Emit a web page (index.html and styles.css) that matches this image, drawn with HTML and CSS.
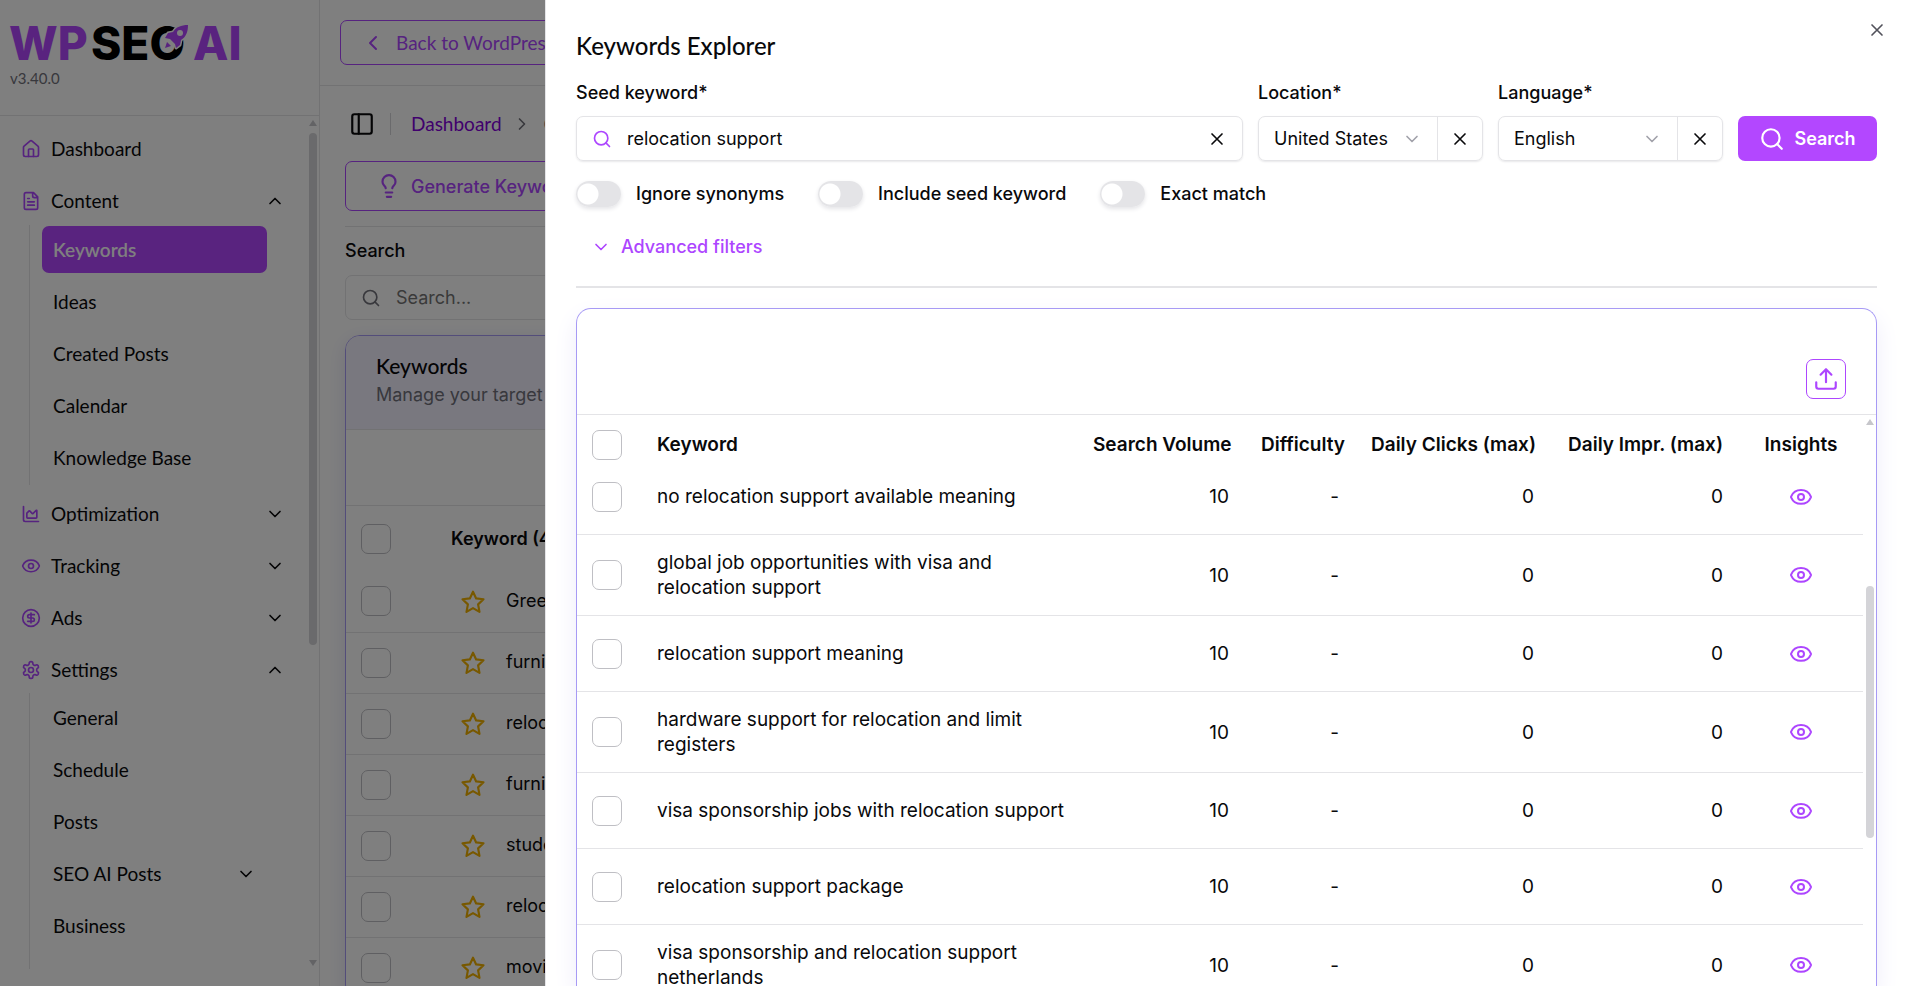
FILE: index.html
```html
<!DOCTYPE html>
<html lang="en">
<head>
    <meta charset="UTF-8">
    <meta name="viewport" content="width=device-width, initial-scale=1.0">
    <title>Keywords Explorer</title>
    <link rel="stylesheet" href="styles.css">
</head>
<body>
    <svg class="sprite" aria-hidden="true">
        <symbol id="eye" viewBox="0 0 24 24"><path d="M2.1 12.3a1 1 0 0 1 0-.7 10.75 10.75 0 0 1 19.8 0 1 1 0 0 1 0 .7 10.75 10.75 0 0 1-19.8 0"/><circle cx="12" cy="12" r="3"/></symbol>
        <symbol id="down" viewBox="0 0 24 24"><path d="m6 9 6 6 6-6"/></symbol>
        <symbol id="up" viewBox="0 0 24 24"><path d="m18 15-6-6-6 6"/></symbol>
        <symbol id="left" viewBox="0 0 24 24"><path d="m15 18-6-6 6-6"/></symbol>
        <symbol id="right" viewBox="0 0 24 24"><path d="m9 18 6-6-6-6"/></symbol>
        <symbol id="close" viewBox="0 0 24 24"><path d="M18 6 6 18M6 6l12 12"/></symbol>
        <symbol id="search" viewBox="0 0 24 24"><circle cx="11" cy="11" r="8"/><path d="m21 21-4.3-4.3"/></symbol>
        <symbol id="star" viewBox="0 0 24 24"><path d="m12 2.5 2.9 6.2 6.8.8-5 4.7 1.3 6.9-6-3.4-6 3.4 1.3-6.9-5-4.7 6.8-.8z"/></symbol>
    </svg>

    <div class="app">
        <aside class="sidebar">
            <div class="brand">
                <svg class="logo" viewBox="0 0 240 48" role="img" aria-label="WP SEO AI">
                    <text class="logo-purple" x="0" y="42">WP</text>
                    <text class="logo-black" x="82" y="42">SEO</text>
                    <text class="logo-purple" x="184" y="42">AI</text>
                    <g transform="translate(155 7)">
                        <path class="rocket-edge" d="M24 0C17 0 12 2 9 7L4 8l-3 5 5 1 5 5 1 4 4-3 1-5c5-3 7-8 7-15z"/>
                        <path class="rocket" d="M24 0C17 0 12 2 9 7L4 8l-3 5 5 1 5 5 1 4 4-3 1-5c5-3 7-8 7-15zM3 17l-2 6 6-2z"/>
                        <circle class="rocket-window" cx="16" cy="8" r="3"/>
                    </g>
                </svg>
                <span class="version">v3.40.0</span>
            </div>
            <nav class="nav">
                <a class="nav-item" href="#"><svg class="icon-nav" viewBox="0 0 24 24"><path d="M15 21v-8a1 1 0 0 0-1-1h-4a1 1 0 0 0-1 1v8"/><path d="M3 10a2 2 0 0 1 .7-1.5l7-6a2 2 0 0 1 2.6 0l7 6A2 2 0 0 1 21 10v9a2 2 0 0 1-2 2H5a2 2 0 0 1-2-2z"/></svg>Dashboard</a>
                <a class="nav-item" href="#"><svg class="icon-nav" viewBox="0 0 24 24"><path d="M15 2H6a2 2 0 0 0-2 2v16a2 2 0 0 0 2 2h12a2 2 0 0 0 2-2V7zM14 2v4a2 2 0 0 0 2 2h4M10 9H8M16 13H8M16 17H8"/></svg>Content<svg class="icon-arrow"><use href="#up"/></svg></a>
                <div class="sub">
                    <a class="sub-item active" href="#">Keywords</a>
                    <a class="sub-item" href="#">Ideas</a>
                    <a class="sub-item" href="#">Created Posts</a>
                    <a class="sub-item" href="#">Calendar</a>
                    <a class="sub-item" href="#">Knowledge Base</a>
                </div>
                <a class="nav-item" href="#"><svg class="icon-nav" viewBox="0 0 24 24"><path d="M3 3v16a2 2 0 0 0 2 2h16"/><path d="M7 11.2a.5.5 0 0 1 .1-.3l2.6-2.6a.5.5 0 0 1 .7 0l3.2 3.2a.5.5 0 0 0 .7 0l3.9-3.9a.5.5 0 0 1 .8.3V16a1 1 0 0 1-1 1H8a1 1 0 0 1-1-1z"/></svg>Optimization<svg class="icon-arrow"><use href="#down"/></svg></a>
                <a class="nav-item" href="#"><svg class="icon-nav"><use href="#eye"/></svg>Tracking<svg class="icon-arrow"><use href="#down"/></svg></a>
                <a class="nav-item" href="#"><svg class="icon-nav" viewBox="0 0 24 24"><circle cx="12" cy="12" r="10"/><path d="M16 8h-6a2 2 0 1 0 0 4h4a2 2 0 1 1 0 4H8M12 18V6"/></svg>Ads<svg class="icon-arrow"><use href="#down"/></svg></a>
                <a class="nav-item" href="#"><svg class="icon-nav" viewBox="0 0 24 24"><path d="M12.2 2h-.4a2 2 0 0 0-2 2v.2a2 2 0 0 1-1 1.7l-.4.3a2 2 0 0 1-2 0l-.2-.1a2 2 0 0 0-2.7.7l-.2.4a2 2 0 0 0 .7 2.7l.2.1a2 2 0 0 1 1 1.7v.5a2 2 0 0 1-1 1.8l-.2.1a2 2 0 0 0-.7 2.7l.2.4a2 2 0 0 0 2.7.7l.2-.1a2 2 0 0 1 2 0l.4.3a2 2 0 0 1 1 1.7v.2a2 2 0 0 0 2 2h.4a2 2 0 0 0 2-2v-.2a2 2 0 0 1 1-1.7l.4-.3a2 2 0 0 1 2 0l.2.1a2 2 0 0 0 2.7-.7l.2-.4a2 2 0 0 0-.7-2.7l-.2-.1a2 2 0 0 1-1-1.8v-.5a2 2 0 0 1 1-1.7l.2-.1a2 2 0 0 0 .7-2.7l-.2-.4a2 2 0 0 0-2.7-.7l-.2.1a2 2 0 0 1-2 0l-.4-.3a2 2 0 0 1-1-1.7V4a2 2 0 0 0-2-2z"/><circle cx="12" cy="12" r="3"/></svg>Settings<svg class="icon-arrow"><use href="#up"/></svg></a>
                <div class="sub sub-last">
                    <a class="sub-item" href="#">General</a>
                    <a class="sub-item" href="#">Schedule</a>
                    <a class="sub-item" href="#">Posts</a>
                    <a class="sub-item" href="#">SEO AI Posts<svg class="icon-arrow"><use href="#down"/></svg></a>
                    <a class="sub-item" href="#">Business</a>
                </div>
                <div class="scrollbar"><i class="scroll-up"></i><i class="scroll-thumb nav-thumb"></i><i class="scroll-down"></i></div>
            </nav>
        </aside>

        <main class="main">
            <header class="topbar">
                <a class="back" href="#"><svg class="icon-24"><use href="#left"/></svg>Back to WordPress</a>
            </header>
            <div class="content">
                <div class="crumbs">
                    <button class="toggle-sidebar" aria-label="Toggle sidebar"><svg class="icon-26" viewBox="0 0 24 24"><rect x="3" y="3" width="18" height="18" rx="2"/><path d="M9 3v18"/></svg></button>
                    <span class="crumb-line"></span>
                    <a class="crumb" href="#">Dashboard</a>
                    <svg class="icon-20 crumb-arrow"><use href="#right"/></svg>
                    <span class="crumb-current">Content</span>
                </div>
                <button class="generate"><svg class="icon-26" viewBox="0 0 24 24"><path d="M15 14c.2-1 .7-1.700 1.500-2.500A4.700 4.700 0 0 0 18 8 6 6 0 0 0 6 8c0 1 .2 2.200 1.500 3.500.7.7 1.300 1.500 1.500 2.500M9 18h6M10 22h4"/></svg>Generate Keywords</button>
                <div class="filter">
                    <label class="label" for="table-search">Search</label>
                    <div class="search-box"><svg class="icon-20"><use href="#search"/></svg><input id="table-search" type="text" placeholder="Search..."></div>
                </div>
                <section class="card">
                    <div class="card-head">
                        <h2>Keywords</h2>
                        <p>Manage your target keywords</p>
                    </div>
                    <div class="card-tools"></div>
                    <table class="saved">
                        <thead>
                            <tr><th class="col-check"><input type="checkbox" aria-label="Select all"></th><th>Keyword (48)</th></tr>
                        </thead>
                        <tbody>
                            <tr><td><input type="checkbox" aria-label="Select"></td><td><svg class="icon-star"><use href="#star"/></svg>Green moving company</td></tr>
                            <tr><td><input type="checkbox" aria-label="Select"></td><td><svg class="icon-star"><use href="#star"/></svg>furniture moving</td></tr>
                            <tr><td><input type="checkbox" aria-label="Select"></td><td><svg class="icon-star"><use href="#star"/></svg>relocation services</td></tr>
                            <tr><td><input type="checkbox" aria-label="Select"></td><td><svg class="icon-star"><use href="#star"/></svg>furniture storage</td></tr>
                            <tr><td><input type="checkbox" aria-label="Select"></td><td><svg class="icon-star"><use href="#star"/></svg>student moving</td></tr>
                            <tr><td><input type="checkbox" aria-label="Select"></td><td><svg class="icon-star"><use href="#star"/></svg>relocation company</td></tr>
                            <tr><td><input type="checkbox" aria-label="Select"></td><td><svg class="icon-star"><use href="#star"/></svg>moving company</td></tr>
                        </tbody>
                    </table>
                </section>
            </div>
        </main>
    </div>

    <div class="overlay"></div>

    <div class="drawer" role="dialog" aria-labelledby="drawer-title">
        <button class="close" aria-label="Close"><svg class="icon-20"><use href="#close"/></svg></button>
        <h1 id="drawer-title">Keywords Explorer</h1>
        <form class="explorer">
            <div class="field field-wide">
                <label class="label" for="seed">Seed keyword*</label>
                <div class="control">
                    <svg class="icon-20 purple"><use href="#search"/></svg>
                    <input id="seed" type="text" value="relocation support">
                    <button type="button" class="clear" aria-label="Clear keyword"><svg class="icon-20"><use href="#close"/></svg></button>
                </div>
            </div>
            <div class="field">
                <label class="label" for="location">Location*</label>
                <div class="control">
                    <select id="location"><option>United States</option></select>
                    <svg class="icon-20 faded"><use href="#down"/></svg>
                    <button type="button" class="clear split" aria-label="Clear location"><svg class="icon-20"><use href="#close"/></svg></button>
                </div>
            </div>
            <div class="field">
                <label class="label" for="language">Language*</label>
                <div class="control">
                    <select id="language"><option>English</option></select>
                    <svg class="icon-20 faded"><use href="#down"/></svg>
                    <button type="button" class="clear split" aria-label="Clear language"><svg class="icon-20"><use href="#close"/></svg></button>
                </div>
            </div>
            <button type="button" class="submit"><svg class="icon-26"><use href="#search"/></svg>Search</button>
        </form>
        <div class="switches">
            <label class="label"><input type="checkbox" class="switch">Ignore synonyms</label>
            <label class="label"><input type="checkbox" class="switch">Include seed keyword</label>
            <label class="label"><input type="checkbox" class="switch">Exact match</label>
        </div>
        <button class="advanced"><svg class="icon-20"><use href="#down"/></svg>Advanced filters</button>

        <section class="results">
            <div class="results-tools">
                <button class="export" aria-label="Export"><svg class="icon-26" viewBox="0 0 24 24"><path d="M12 15V3M17 8l-5-5-5 5M21 15v4a2 2 0 0 1-2 2H5a2 2 0 0 1-2-2v-4"/></svg></button>
            </div>
            <div class="results-body">
                <table class="found">
                    <thead>
                        <tr>
                            <th class="w-check"><input type="checkbox" aria-label="Select all"></th>
                            <th>Keyword</th>
                            <th class="num w-volume">Search Volume</th>
                            <th class="num w-difficulty">Difficulty</th>
                            <th class="num w-clicks">Daily Clicks (max)</th>
                            <th class="num w-impr">Daily Impr. (max)</th>
                            <th class="mid w-insights">Insights</th>
                        </tr>
                    </thead>
                    <tbody id="rows">
                        <!-- Rows are inserted below -->
                    </tbody>
                </table>
                <div class="scrollbar"><i class="scroll-up"></i><i class="scroll-thumb results-thumb"></i></div>
            </div>
        </section>
    </div>

    <script>
        const keywords = [
            'no relocation support available meaning',
            'global job opportunities with visa and relocation support',
            'relocation support meaning',
            'hardware support for relocation and limit registers',
            'visa sponsorship jobs with relocation support',
            'relocation support package',
            'visa sponsorship and relocation support netherlands'
        ];
        const tbody = document.getElementById('rows');
        keywords.forEach(name => {
            tbody.insertAdjacentHTML('beforeend', `
                <tr>
                    <td><input type="checkbox" aria-label="Select ${name}"></td>
                    <td>${name}</td>
                    <td class="num">10</td>
                    <td class="num">-</td>
                    <td class="num">0</td>
                    <td class="num">0</td>
                    <td class="mid"><button class="view" aria-label="View insights"><svg class="icon-24"><use href="#eye"/></svg></button></td>
                </tr>
            `);
        });
    </script>
</body>
</html>
```
FILE: styles.css
```css
* {
    box-sizing: border-box;
}
body {
    margin: 0;
    height: 100vh;
    overflow: hidden;
    font-family: Inter, sans-serif;
    font-size: 18px;
    line-height: 25px;
    color: #09090b;
    background: #fff;
}
h1, h2, p {
    margin: 0;
}
a {
    color: inherit;
    text-decoration: none;
}
button {
    font: inherit;
    color: inherit;
    background: none;
    border: 0;
    padding: 0;
    display: flex;
    align-items: center;
    justify-content: center;
}
svg {
    fill: none;
    stroke: currentColor;
    stroke-width: 2;
    stroke-linecap: round;
    stroke-linejoin: round;
    flex: none;
}
.sprite {
    display: none;
}
.icon-20, .icon-nav, .icon-arrow {
    width: 20px;
    height: 20px;
}
.icon-24 {
    width: 24px;
    height: 24px;
}
.icon-26 {
    width: 26px;
    height: 26px;
}
.purple {
    color: #ad46ff;
}
.faded {
    color: #a1a1aa;
}
input[type="checkbox"] {
    appearance: none;
    display: block;
    width: 30px;
    height: 30px;
    margin: 0;
    border: 1px solid #bfbfc4;
    border-radius: 7px;
}

/* page behind the drawer */
.app {
    display: flex;
    height: 100vh;
    overflow: hidden;
}
.sidebar {
    display: flex;
    flex-direction: column;
    width: 320px;
    flex: none;
    border-right: 1px solid #e4e4e7;
    font-family: Lato, sans-serif;
    font-size: 19px;
}
.brand {
    height: 116px;
    padding: 18px 9px 0;
    border-bottom: 1px solid #e4e4e7;
}
.logo {
    display: block;
    width: 240px;
    height: 48px;
    overflow: visible;
    font-family: Inter, sans-serif;
    font-size: 46px;
    font-weight: 800;
    stroke: none;
}
.logo-purple, .rocket {
    fill: #b347ff;
}
.logo-black {
    fill: #000;
}
.rocket-edge {
    fill: #fff;
    stroke: #fff;
    stroke-width: 3;
}
.rocket-window {
    fill: #fff;
}
.version {
    display: block;
    font-size: 15px;
    line-height: 24px;
    padding-left: 1px;
    color: #71717a;
}
.nav {
    position: relative;
    flex: 1;
    min-height: 0;
    padding: 9px 37px 0 9px;
    margin-bottom: 17px;
    overflow: hidden;
    display: flex;
    flex-direction: column;
    gap: 5px;
}
.nav-item {
    display: flex;
    align-items: center;
    flex: none;
    gap: 10px;
    height: 47px;
    padding: 0 0 0 12px;
}
.nav-item .icon-nav {
    color: #ad46ff;
}
.icon-arrow {
    margin-left: auto;
}
.nav-item .icon-arrow {
    margin-right: -3px;
}
.sub {
    display: flex;
    flex-direction: column;
    flex: none;
    gap: 5px;
    margin: -4px 15px 0 20px;
    padding: 1px 0 4px 12px;
    border-left: 1px solid #e4e4e7;
}
.sub-last {
    flex: 1;
    margin-top: -5px;
}
.sub-item {
    display: flex;
    align-items: center;
    flex: none;
    height: 47px;
    padding: 0 11px;
    border-radius: 7px;
}
.active {
    background: #b347ff;
    color: #fff;
    font-weight: 600;
}

/* drawn scrollbars */
.scrollbar {
    position: absolute;
    top: 0;
    right: 0;
    bottom: 0;
    width: 14px;
}
.scrollbar i {
    position: absolute;
    left: 4px;
    width: 8px;
}
.scroll-up {
    top: 4px;
    border: 4px solid transparent;
    border-top: 0;
    border-bottom: 6px solid #c6c6cb;
}
.scroll-down {
    bottom: 3px;
    border: 4px solid transparent;
    border-bottom: 0;
    border-top: 6px solid #c6c6cb;
}
.scroll-thumb {
    border-radius: 4px;
    background: #d4d4d8;
}
.nav-thumb {
    top: 2%;
    height: 60%;
}
.results-thumb {
    top: 30%;
    height: 44%;
}

.main {
    flex: 1;
    min-width: 0;
    overflow: hidden;
}
.topbar {
    display: flex;
    height: 86px;
    padding: 20px;
    border-bottom: 1px solid #e4e4e7;
}
.back {
    display: flex;
    align-items: center;
    gap: 11px;
    height: 45px;
    padding: 0 20px;
    border: 1px solid #ad46ff;
    border-radius: 7px;
    color: #ad46ff;
    font-family: Lato, sans-serif;
    font-size: 19px;
}
.content {
    padding: 18px 25px;
}
.crumbs {
    display: flex;
    align-items: center;
    height: 39px;
    padding-left: 4px;
    font-family: Lato, sans-serif;
    font-size: 19px;
}
.crumb-line {
    width: 1px;
    height: 22px;
    margin: 0 20px 0 15px;
    background: #d4d4d8;
}
.crumb {
    margin-right: 10px;
    color: #8200db;
}
.crumb-arrow {
    color: #71717a;
}
.crumb-current {
    margin-left: 12px;
    color: #71717a;
}
.generate {
    height: 50px;
    margin: 18px 0 15px;
    padding: 0 30px;
    gap: 9px;
    border: 1px solid #ad46ff;
    border-radius: 7px;
    color: #ad46ff;
    font-weight: 500;
}
.filter {
    border-top: 1px solid #e4e4e7;
    padding-top: 11px;
}
.label {
    font-weight: 500;
}
.search-box {
    display: flex;
    align-items: center;
    height: 45px;
    margin: 12px 0 15px;
    padding: 0 15px;
    gap: 15px;
    border: 1px solid #e4e4e7;
    border-radius: 7px;
    color: #71717a;
}
.search-box input, .control input, .control select {
    flex: 1;
    min-width: 0;
    height: 100%;
    padding: 0;
    border: 0;
    outline: 0;
    background: none;
    font: inherit;
    color: inherit;
    appearance: none;
}
.card {
    border: 1px solid #a79af5;
    border-radius: 15px;
    overflow: hidden;
    box-shadow: 0 5px 20px #e4e2f5;
}
.card-head {
    height: 94px;
    padding: 15px 30px;
    background: #f2f0ff;
    border-bottom: 1px solid #e4e4e7;
}
.card-head h2 {
    font: 500 21px/29px Lato, sans-serif;
}
.card-head p {
    line-height: 29px;
    color: #71717a;
}
.card-tools {
    height: 76px;
    border-bottom: 1px solid #e4e4e7;
}
table {
    width: 100%;
    border-collapse: collapse;
    table-layout: fixed;
}
th {
    font-weight: 600;
    text-align: left;
    white-space: nowrap;
}
.saved th {
    height: 65px;
    padding: 0 15px;
}
.saved .col-check {
    width: 90px;
}
.saved td {
    height: 61px;
    padding: 0 15px;
    border-bottom: 1px solid #e4e4e7;
}
.icon-star {
    width: 26px;
    height: 26px;
    margin: 0 20px 0 9px;
    vertical-align: middle;
    color: #f0b100;
}
.overlay {
    position: fixed;
    inset: 0;
    background: rgba(0, 0, 0, 0.5);
}

/* drawer */
.drawer {
    position: fixed;
    inset: 0 0 0 auto;
    display: flex;
    flex-direction: column;
    width: calc(100% - 545px);
    padding: 28px 28px 0 30px;
    overflow: hidden;
    background: #fff;
    border-left: 1px solid #e4e4e7;
}
.drawer h1 {
    font: 500 24px/36px Lato, sans-serif;
}
.close {
    position: absolute;
    top: 20px;
    right: 18px;
    color: #52525b;
}
.explorer {
    display: flex;
    align-items: flex-end;
    gap: 15px;
    margin-top: 16px;
}
.field {
    width: 225px;
}
.field-wide {
    flex: 1;
}
.control {
    display: flex;
    align-items: center;
    height: 45px;
    margin-top: 11px;
    padding-left: 15px;
    border: 1px solid #e4e4e7;
    border-radius: 7px;
    box-shadow: 0 1px 2px #e8e8ea;
}
.control input {
    margin-left: 15px;
}
.control .faded {
    margin-right: 15px;
}
.clear {
    width: 50px;
    height: 100%;
}
.split {
    width: 45px;
    border-left: 1px solid #e4e4e7;
}
.submit {
    height: 45px;
    width: 139px;
    gap: 9px;
    border-radius: 7px;
    background: #b347ff;
    color: #fff;
    font-weight: 600;
}
.switches {
    display: flex;
    gap: 34px;
    margin-top: 19px;
}
.switches .label {
    display: flex;
    align-items: center;
    gap: 15px;
    height: 27px;
}
input.switch {
    width: 45px;
    height: 26px;
    border: 0;
    border-radius: 13px;
    background: radial-gradient(circle at 12px 13px, #fff 10px, #e4e4e7 11px);
    box-shadow: 0 2px 4px #e4e4e7;
}
.advanced {
    align-self: flex-start;
    gap: 10px;
    margin: 27px 0 0 15px;
    color: #ad46ff;
    font-weight: 500;
}
.results {
    position: relative;
    flex: 1;
    min-height: 0;
    display: flex;
    flex-direction: column;
    margin-top: 49px;
    border: 1px solid #a79af5;
    border-bottom: 0;
    border-radius: 15px 15px 0 0;
    box-shadow: 0 10px 25px #eeecfa;
}
/* rule above the results card */
.results::before {
    content: "";
    position: absolute;
    top: -23px;
    left: -1px;
    right: -1px;
    height: 2px;
    background: #e4e4e7;
}
.results-tools {
    display: flex;
    justify-content: flex-end;
    padding: 50px 30px 15px;
    border-bottom: 1px solid #e4e4e7;
}
.export {
    width: 40px;
    height: 40px;
    border: 1px solid #ad46ff;
    border-radius: 7px;
    color: #ad46ff;
}
.results-body {
    position: relative;
    flex: 1;
    min-height: 0;
    padding-right: 13px;
    overflow: hidden;
}
.found {
    font-size: 19px;
}
.found th {
    height: 59px;
    padding: 0 16px;
}
.found td {
    padding: 15px 16px;
    border-bottom: 1px solid #e4e4e7;
}
.found th:first-child, .found td:first-child {
    padding-left: 15px;
}
.found td:nth-child(2) {
    padding-right: 4px;
}
.found tr:first-child td {
    padding-top: 0;
}
.w-check {
    width: 64px;
}
.w-volume {
    width: 168px;
}
.w-difficulty {
    width: 110px;
}
.w-clicks {
    width: 195px;
}
.w-impr {
    width: 189px;
}
.w-insights {
    width: 124px;
}
.found .num {
    text-align: right;
}
.found .mid {
    text-align: center;
}
.view {
    width: 45px;
    height: 45px;
    margin: 0 auto;
    color: #ad46ff;
}
```
